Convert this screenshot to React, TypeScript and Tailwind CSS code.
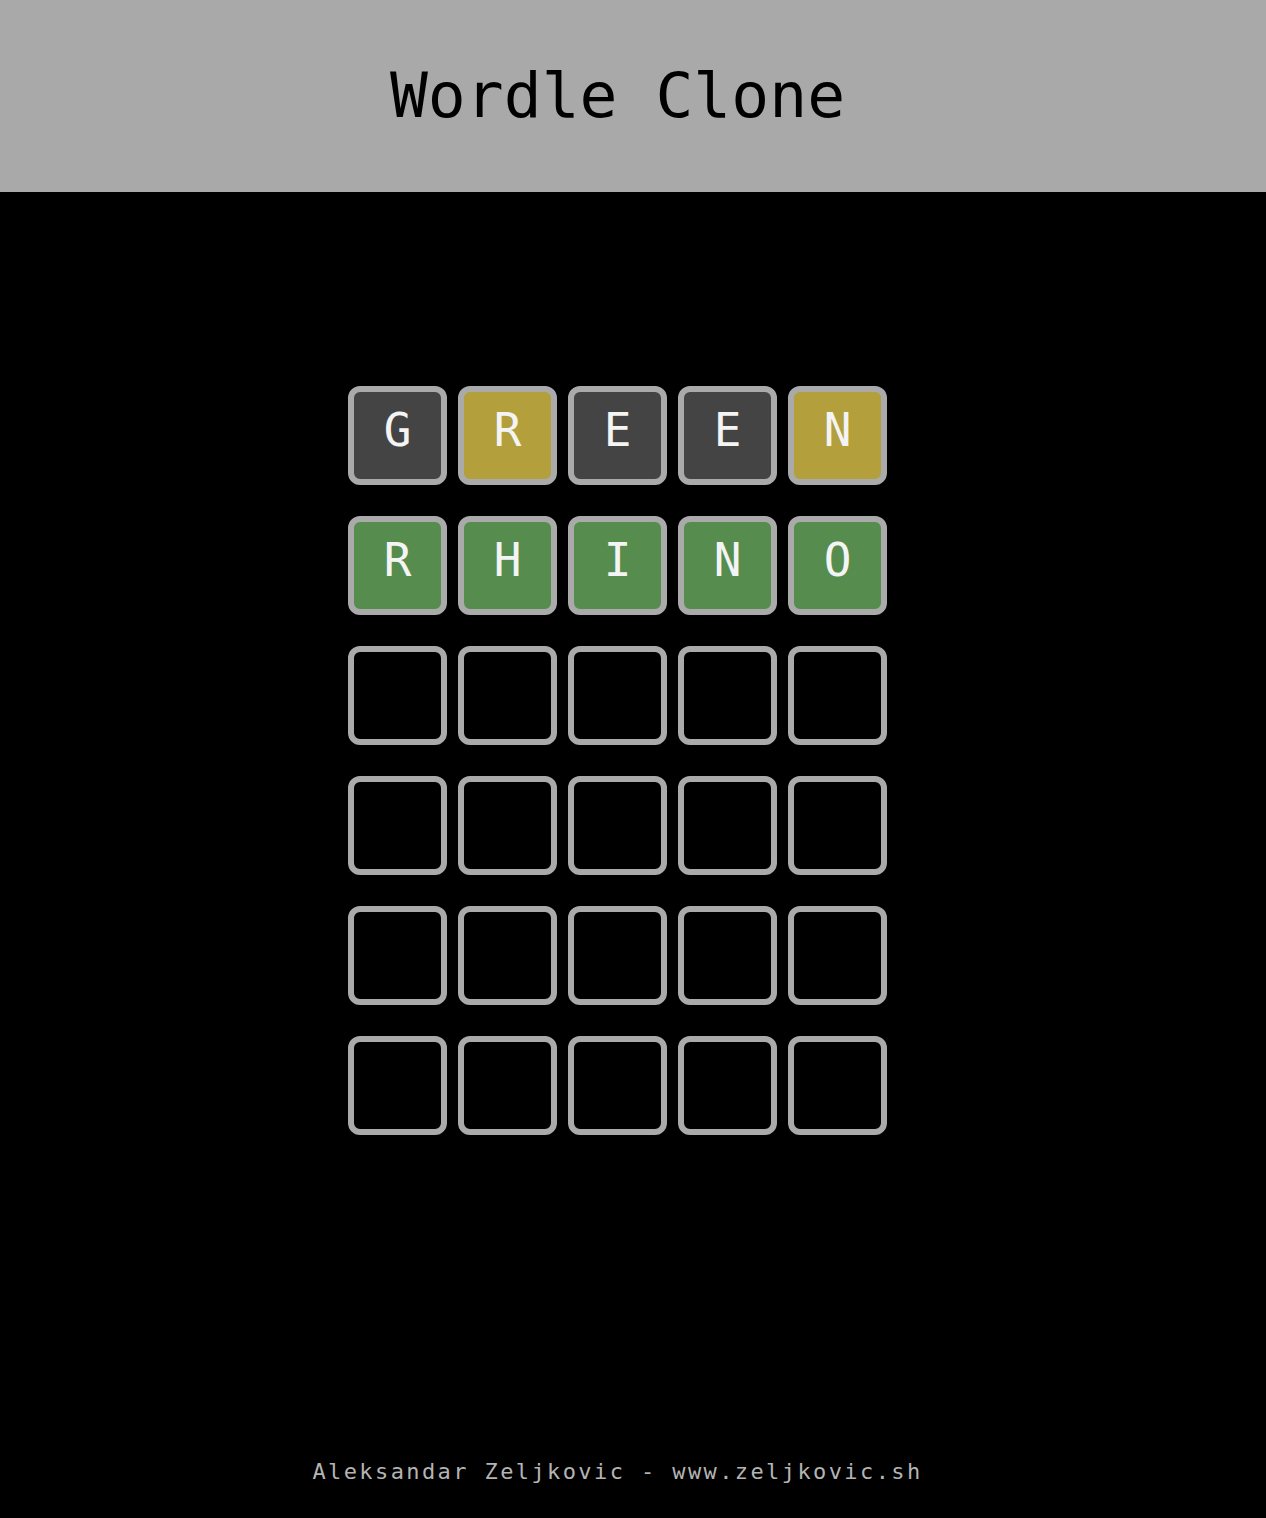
const rows: { l: string; c: string }[][] = [
  [
    { l: 'G', c: 'x' },
    { l: 'R', c: 'y' },
    { l: 'E', c: 'x' },
    { l: 'E', c: 'x' },
    { l: 'N', c: 'y' },
  ],
  [
    { l: 'R', c: 'g' },
    { l: 'H', c: 'g' },
    { l: 'I', c: 'g' },
    { l: 'N', c: 'g' },
    { l: 'O', c: 'g' },
  ],
];

const fill: Record<string, string> = {
  x: 'bg-[#444444]',
  y: 'bg-[#b39f3b]',
  g: 'bg-[#568d4f]',
  '': 'bg-black',
};

function Tile({ letter, state }: { letter: string; state: string }) {
  return (
    <div
      className={`w-[99px] h-[99px] rounded-[12px] border-[6px] border-[#aaaaaa] flex items-center justify-center pb-[12px] text-[46px] leading-none text-[#f4f4f4] ${fill[state]}`}
    >
      {letter}
    </div>
  );
}

export default function App() {
  const board = [...rows];
  while (board.length < 6) board.push(Array.from({ length: 5 }, () => ({ l: '', c: '' })));

  return (
    <div className="min-h-[1518px] bg-black font-['DejaVu_Sans_Mono',monospace]">
      <header className="h-[192px] bg-[#a9a9a9] flex items-center">
        <h1 className="w-[1235px] text-center text-[63px] text-black">Wordle Clone</h1>
      </header>

      <main className="w-[1235px] pt-[194px] flex flex-col items-center gap-[31px]">
        {board.map((row, i) => (
          <div key={i} className="flex gap-[11px]">
            {row.map((t, j) => (
              <Tile key={j} letter={t.l} state={t.c} />
            ))}
          </div>
        ))}
      </main>

      <footer className="w-[1235px] mt-[320px] text-center text-[22px] leading-[33px] tracking-[2.4px] text-[#b4b4b4]">
        Aleksandar Zeljkovic - www.zeljkovic.sh
      </footer>
    </div>
  );
}
